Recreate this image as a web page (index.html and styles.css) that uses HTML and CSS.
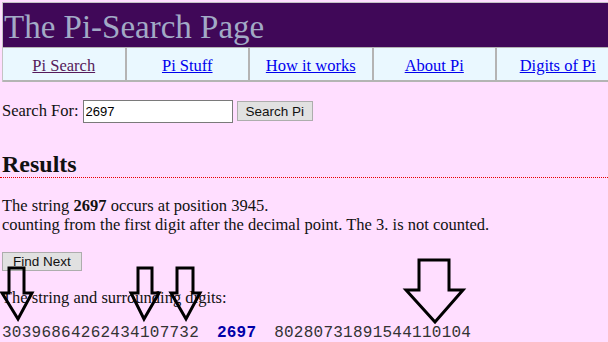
FILE: index.html
```html
<!DOCTYPE html>
<html lang="en">
<head>
    <meta charset="UTF-8">
    <title>The Pi-Search Page</title>
    <link rel="stylesheet" href="styles.css">
</head>
<body>
    <!-- Cabecera y menu -->
    <div class="frame">
        <div class="banner">The Pi-Search Page</div>
        <div class="nav">
            <div class="nav-cell"><a href="#" class="visited">Pi Search</a></div>
            <div class="nav-cell"><a href="#">Pi Stuff</a></div>
            <div class="nav-cell"><a href="#">How it works</a></div>
            <div class="nav-cell"><a href="#">About Pi</a></div>
            <div class="nav-cell"><a href="#">Digits of Pi</a></div>
        </div>
    </div>

    <main class="content">
        <form class="search">
            <label for="q">Search For:</label>
            <input type="text" id="q" class="search-input" value="2697">
            <button type="button" class="btn">Search Pi</button>
        </form>

        <h2 class="results">Results</h2>

        <p class="found">
            The string <b>2697</b> occurs at position 3945.<br>
            counting from the first digit after the decimal point. The 3. is not counted.
        </p>

        <button type="button" class="btn btn-next">Find Next</button>

        <p class="surround">The string and surrounding digits:</p>
        <div class="digits">30396864262434107732 <span class="hit">2697</span> 80280731891544110104</div>
    </main>

    <!-- flechas dibujadas encima -->
    <svg class="arrows" width="608" height="342" viewBox="0 0 608 342">
        <polygon points="9,268 24,268 24,293 32,293 18,319 2,293 9,293"/>
        <polygon points="138,268 152,268 152,293 159,293 144,319 131,293 138,293"/>
        <polygon points="177,268 193,268 193,293 200,293 186,319 171,293 177,293"/>
        <polygon points="419,260 449,260 449,290 463,290 435,322 406,290 419,290"/>
    </svg>
</body>
</html>
```

FILE: styles.css
```css
/* General */
html, body {
    margin: 0;
    padding: 0;
    overflow: hidden;
}

body {
    background-color: #ffdeff;
    font-family: "Liberation Serif", "Times New Roman", serif;
    font-size: 16.5px;
    color: #111;
    position: relative;
    height: 342px;
}

/* Cabecera */
.frame {
    margin: 2px 0 0 2px;
    border-top: 1px solid #c4c4c4;
    border-left: 1px solid #c4c4c4;
    overflow: hidden;
}

.banner {
    background-color: #400858;
    color: #a2aac6;
    font-size: 33px;
    height: 44px;
    line-height: 48px;
    padding-left: 1px;
    white-space: nowrap;
    overflow: hidden;
}

.nav {
    display: grid;
    grid-template-columns: repeat(5, 123.5px);
    background-color: #eaf8ff;
    border-top: 1px solid #b4b4b4;
    border-bottom: 2px solid #b4b4b4;
    width: 700px;
}

.nav-cell {
    height: 32px;
    line-height: 36px;
    text-align: center;
    border-right: 2px solid #b4b4b4;
    white-space: nowrap;
}

.nav-cell a {
    color: #0000ee;
}

.nav-cell a.visited {
    color: #551a5b;
}

/* Contenido */
.content {
    padding: 0 2px;
}

.search {
    display: flex;
    align-items: center;
    margin-top: 17px;
    height: 24px;
}

.search label {
    margin-right: 4px;
}

.search-input {
    width: 144px;
    height: 19px;
    padding: 1px 2px;
    border: 1px solid #7a7a7a;
    font-family: "Liberation Sans", Arial, sans-serif;
    font-size: 13px;
    margin: 0 4px 0 0;
}

.btn {
    font-family: "Liberation Sans", Arial, sans-serif;
    font-size: 13.5px;
    background-color: #e1e1e1;
    border: 1px solid #adadad;
    padding: 1px 8px;
    height: 20px;
    color: #111;
}

.results {
    font-size: 24px;
    font-weight: bold;
    margin: 29px -2px 0;
    padding: 0 2px;
    line-height: 25px;
    border-bottom: 1px dotted #e80000;
}

.found {
    margin: 18px 0 0;
    line-height: 19px;
}

.btn-next {
    margin-top: 18px;
    padding: 0 10px;
    height: 19px;
}

.surround {
    margin: 17px 0 0;
    line-height: 19px;
}

.digits {
    margin-top: 17px;
    font-family: "Liberation Mono", "Courier New", monospace;
    font-size: 16px;
    letter-spacing: 0.25px;
    color: #333;
    white-space: pre;
}

.hit {
    font-weight: bold;
    color: #0000a8;
    padding: 0 8px;
}

/* Flechas */
.arrows {
    position: absolute;
    top: 0;
    left: 0;
    pointer-events: none;
}

.arrows polygon {
    fill: none;
    stroke: #000;
    stroke-width: 3;
    stroke-linejoin: miter;
}
```
